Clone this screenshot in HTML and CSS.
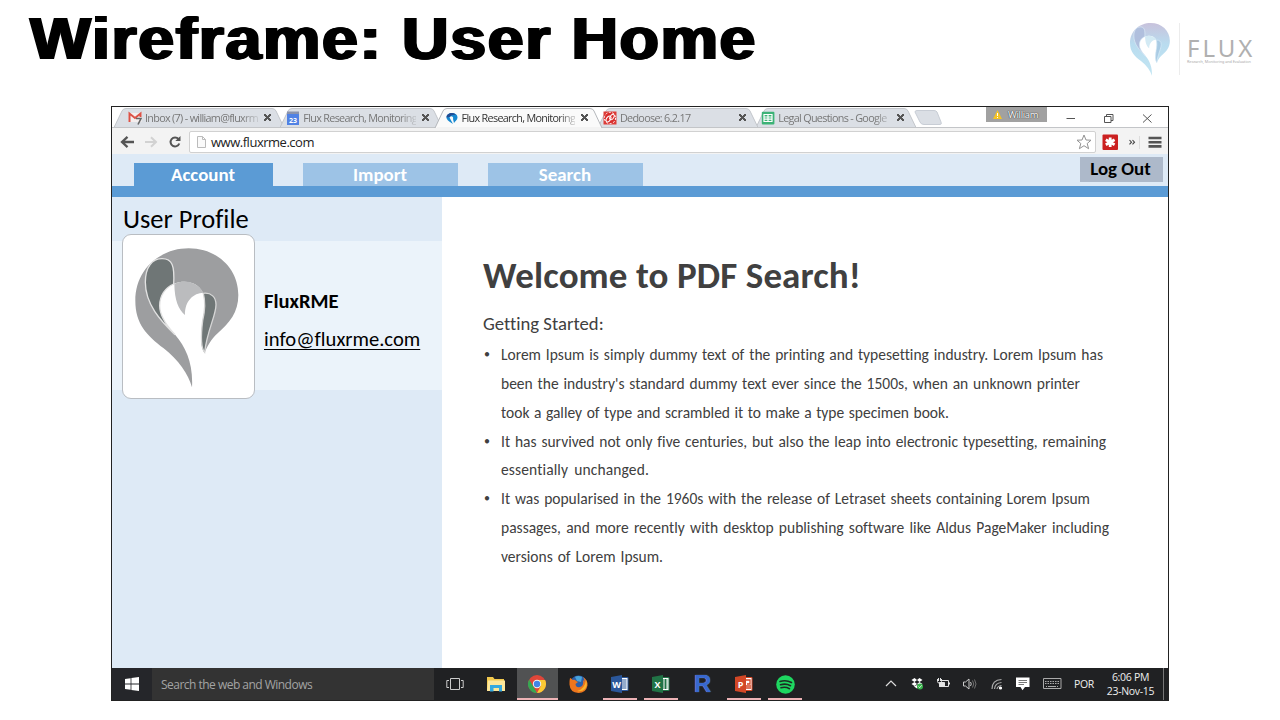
FILE: index.html
```html
<!DOCTYPE html>
<html lang="en">
<head>
<meta charset="utf-8">
<title>Wireframe: User Home</title>
<link rel="stylesheet" href="styles.css">
</head>
<body>
<svg class="defs" width="0" height="0">
  <defs>
    <linearGradient id="flux" x1="0" y1="0" x2="0" y2="1"><stop offset="0" stop-color="#c8c2dc"/><stop offset=".4" stop-color="#b9dcef"/><stop offset="1" stop-color="#c3e6f3"/></linearGradient>
    <path id="m-body" d="M265 143C350 143 414 203 414 283C414 335 388 366 352 398C332 416 319 440 313 457C303 445 301 420 303 395C306 360 318 320 311 285C303 257 280 243 252 243C210 243 178 272 178 315C178 347 198 374 225 403C257 440 279 490 275 560C264 520 235 478 190 443C140 404 105 370 105 300C105 205 180 143 265 143Z"/>
    <path id="m-left" d="M185 174C216 174 223 195 220 250C195 260 178 285 178 315C178 347 200 376 224 402C180 360 135 310 135 245C135 200 155 174 185 174Z"/>
    <path id="m-right" d="M309 278C333 275 347 290 347 312C347 345 320 390 313 455C300 440 302 400 307 360C313 335 316 305 309 278Z"/>
    <path id="m-heart" d="M222 250C245 237 288 239 309 276C280 277 253 300 254 343C234 325 223 300 222 250Z"/>
  </defs>
</svg>
<header class="slide-head">
  <h1 class="slide-title">Wireframe: User Home</h1>
  <div class="brand">
    <svg class="brand-mark" viewBox="105 143 310 418" preserveAspectRatio="none"><use href="#m-body" fill="url(#flux)"/><use href="#m-left" fill="#b0bfdd" stroke="#dcecf7" stroke-width="5"/><use href="#m-right" fill="#a9cbe4" stroke="#dcecf7" stroke-width="5"/><use href="#m-heart" fill="#d3eaf4"/></svg>
    <span class="brand-rule"></span>
    <div class="brand-words"><div class="brand-name">FLUX</div><div class="brand-tag">Research, Monitoring and Evaluation</div></div>
  </div>
</header>

<main class="screen">
  <div class="tabstrip">
    <svg class="tab-shapes" width="1056" height="21" viewBox="0 0 1056 21">
      <g fill="#dbdfe5" stroke="#c3c6cb" stroke-width="1">
        <path d="M644 20.500L652 4Q653 1.500 656 1.500H792Q795 1.500 796 4L804 20.500"/>
        <path d="M486 20.500L494 4Q495 1.500 498 1.500H634Q637 1.500 638 4L646 20.500"/>
        <path d="M2 20.500L10 4Q11 1.500 14 1.500H160Q163 1.500 164 4L172 20.500"/>
        <path d="M168 20.500L176 4Q177 1.500 180 1.500H318Q321 1.500 322 4L330 20.500"/>
        <path d="M803 5Q803 3.500 805 3.500H822Q824 3.500 825 5L829 15Q830 17.500 828 17.500H812Q809 17.500 808 15Z" stroke="#c8cdd5"/>
      </g>
      <path d="M0 20.500H1056" stroke="#c3c5c8"/>
      <path d="M323 21L331 4Q332 1.500 335 1.500H478Q481 1.500 482 4L490 21" fill="#fafafa" stroke="#b4b7bb"/>
      <path d="M325 20.500H488" stroke="#f3f3f3"/>
    </svg>
    <div class="tab"><svg class="fav" viewBox="0 0 14 14"><path d="M.5 2h13v9H.5z" fill="#f4eeee"/><path d="M1.500 11V2.500L7 7l5.500-4.500V6" fill="none" stroke="#dc5247" stroke-width="2"/><path d="M8 7.500h5L10 13.500" fill="none" stroke="#666" stroke-width="1.600"/></svg><span class="tab-text">Inbox (7) - william@fluxrm</span><i class="x"></i></div>
    <div class="tab"><svg class="fav" viewBox="0 0 14 14"><path d="M1 .5h12v3H1z" fill="#8b93ac"/><path d="M1 3h12v11H1z" fill="#5182e4"/><text x="7" y="11.500" text-anchor="middle" class="cal-num">23</text></svg><span class="tab-text">Flux Research, Monitoring</span><i class="x"></i></div>
    <div class="tab active"><svg class="fav" viewBox="0 0 14 14"><path d="M7 2C10 2 12.500 3.500 12.500 6.500C12.500 9 10 10 9 12L8 8C9 6 6 4 4.500 6.500L8 13C5 11 1.500 9 1.500 6.500C1.500 3.500 4 2 7 2Z" fill="#1688d0"/><path d="M7 2C4 2 1.500 3.500 1.500 6.500L4.500 6Q7 3 11 4Q9.500 2 7 2Z" fill="#224b92"/></svg><span class="tab-text">Flux Research, Monitoring</span><i class="x"></i></div>
    <div class="tab"><svg class="fav" viewBox="0 0 14 14"><path d="M.5.5h13v13H.5z" fill="#dd3c38"/><circle cx="7" cy="7" r="5.600" fill="#d92d2d" stroke="#fff" stroke-width="1" stroke-dasharray="2 1.500"/><ellipse cx="5.500" cy="8" rx="2" ry="3.200" transform="rotate(35 5.500 8)" fill="none" stroke="#fff"/><ellipse cx="9" cy="6" rx="1.800" ry="3" transform="rotate(35 9 6)" fill="none" stroke="#fff"/></svg><span class="tab-text">Dedoose: 6.2.17</span><i class="x"></i></div>
    <div class="tab"><svg class="fav" viewBox="0 0 14 14"><rect x=".8" y=".8" width="12.600" height="12.600" rx="1" fill="#3db377"/><path d="M3 3.500h8v7H3zM3 6h8M3 8.200h8M7 3.500v7" fill="none" stroke="#fff" stroke-width="1.200"/></svg><span class="tab-text">Legal Questions - Google</span><i class="x"></i></div>
    <div class="user"><svg width="9" height="9" viewBox="0 0 9 9"><path d="M4.500 0L9 9H0Z" fill="#f6c423"/><path d="M4.500 3v3M4.500 7v1" stroke="#fff"/></svg><span>William</span></div>
    <svg class="winbtns" width="102" height="21" viewBox="0 0 102 21" fill="none" stroke="#555" stroke-width="1"><path d="M7.500 11.500h8.500M45.500 9.500h6.500v6h-6.500zM47.500 9.500v-2h6.500v6h-2M84 7.500l8.500 8M92.500 7.500l-8.500 8"/></svg>
  </div>

  <div class="toolbar">
    <svg class="nav" width="76" height="26" viewBox="0 0 76 26" fill="none"><path d="M22 14H10.500M15.500 8.800L10 14L15.500 19.200" stroke="#555" stroke-width="2.300"/><path d="M33 14H43M39 9.200L44 14L39 18.800" stroke="#d2d2d2" stroke-width="2"/><path d="M66.500 11A4.500 4.500 0 1 0 67.300 15.500" stroke="#555" stroke-width="2"/><path d="M68.500 8v5h-5.200z" fill="#555"/></svg>
    <div class="urlbox">
      <svg width="11" height="14" viewBox="0 0 11 14" fill="#fafafa" stroke="#bbb"><path d="M1.500 1.500H6.500L9.500 4.500V12.500H1.500ZM6.500 1.500V4.500H9.500"/></svg>
      <span class="url">www.fluxrme.com</span>
      <svg class="star" width="16" height="16" viewBox="0 0 16 16" fill="#fff" stroke="#929292"><path d="M8 1L10 6L15 6.200L11.200 9.500L12.600 14.700L8 11.700L3.400 14.700L4.800 9.500L1 6.200L6 6Z"/></svg>
    </div>
    <svg class="ext" width="72" height="26" viewBox="0 0 72 26"><rect x="6.500" y="6.500" width="15.500" height="15.500" rx="1" fill="#cb2020"/><path d="M14.200 9.500v9.500M9.800 11.800l8.800 5M18.600 11.800l-8.800 5" stroke="#fff" stroke-width="2.800"/><path d="M33.500 12l2 2.200l-2 2.200M36.500 12l2 2.200l-2 2.200" fill="none" stroke="#444" stroke-width="1.100"/><path d="M43.500 8v13" stroke="#ddd"/><path d="M52.500 10h13M52.500 14.200h13M52.500 18.400h13" stroke="#555" stroke-width="2.600"/></svg>
  </div>

  <nav class="app-nav">
    <a class="app-tab current">Account</a><a class="app-tab">Import</a><a class="app-tab">Search</a>
    <a class="logout">Log Out</a>
  </nav>

  <div class="content">
    <aside class="sidebar">
      <h2 class="side-title"><span>User Profile</span></h2>
      <div class="profile">
        <div class="avatar"><svg width="104" height="140" viewBox="104 142 312 420"><use href="#m-body" fill="#9d9ea0"/><use href="#m-left" fill="#6f7676" stroke="#e2e2e2" stroke-width="4"/><use href="#m-right" fill="#6f7676" stroke="#d6d6d6" stroke-width="4"/><use href="#m-heart" fill="#bbbcbe"/></svg></div>
        <div class="who"><div class="name">FluxRME</div><div class="mail">info@fluxrme.com</div></div>
      </div>
    </aside>
    <section class="welcome">
      <h2 class="hello">Welcome to PDF Search!</h2>
      <p class="start">Getting Started:</p>
      <ul class="notes">
        <li><span class="l1">Lorem Ipsum is simply dummy text of the printing and typesetting industry. Lorem Ipsum has</span><span class="l2">been the industry's standard dummy text ever since the 1500s, when an unknown printer</span><span class="l3">took a galley of type and scrambled it to make a type specimen book.</span></li>
        <li><span class="l4">It has survived not only five centuries, but also the leap into electronic typesetting, remaining</span><span class="l5">essentially unchanged.</span></li>
        <li><span class="l6">It was popularised in the 1960s with the release of Letraset sheets containing Lorem Ipsum</span><span class="l7">passages, and more recently with desktop publishing software like Aldus PageMaker including</span><span class="l8">versions of Lorem Ipsum.</span></li>
      </ul>
    </section>
  </div>

  <footer class="taskbar">
    <div class="win"><svg width="14" height="14" viewBox="0 0 14 14" fill="#fff"><path d="M0 2L5.600 1.200V6.600H0ZM6.400 1.100L14 0V6.600H6.400ZM0 7.400H5.600V12.800L0 12ZM6.400 7.400H14V14L6.400 12.900Z"/></svg></div>
    <div class="search">Search the web and Windows</div>
    <div class="apps">
      <div class="app"><svg width="18" height="12" viewBox="0 0 18 12" fill="none" stroke="#ccc"><path d="M4.500.5h9v11h-9zM3 2.500H.8v7H3M15 2.500h2.200v7H15"/></svg></div>
      <div class="app"><svg width="18" height="16" viewBox="0 0 18 16"><path d="M0 1h6l1.500 2H17v12H0z" fill="#f2c94e"/><path d="M1 4.500h17V15H0z" fill="#fde79b"/><path d="M3 9h12v6.500h-3V12H6.500v3.500H3z" fill="#35a9df"/></svg></div>
      <div class="app on"><svg width="18" height="18" viewBox="0 0 18 18"><circle cx="9" cy="9" r="9" fill="#e04639"/><path d="M1.200 4.500L5.200 11.200L9 18A9 9 0 0 1 1.200 4.500Z" fill="#35a853"/><path d="M9 5H17.100A9 9 0 0 1 9 18L12.700 11.200Z" fill="#fbc934"/><circle cx="9" cy="9" r="4.200" fill="#f4f4f4"/><circle cx="9" cy="9" r="3.200" fill="#4285e8"/></svg></div>
      <div class="app"><svg width="19" height="19" viewBox="0 0 19 19"><circle cx="9.500" cy="9" r="8.500" fill="#2d5fa8"/><path d="M6 2Q9 0 13 2L12 7L8 6Z" fill="#47a5dc"/><path d="M1 3Q3 3.500 3.500 5Q6 4 7 6L9 7L6.500 9Q7 13 11 12Q15 11 14 5Q15 6 15.500 7Q15.500 4 14 2Q19 5 18.500 10.500Q17 18 9.500 18Q1 17.500.5 9.500Q.3 6 1 3Z" fill="#ed751d"/><path d="M17 5Q19 10 16 14Q13 17 8 16Q16 14 17 5Z" fill="#f9b52b"/></svg></div>
      <div class="app open"><svg width="18" height="18" viewBox="0 0 18 18"><path d="M9 2.500h8v13H9z" fill="#fff" stroke="#2b579a"/><path d="M11 5h4.500M11 7h4.500M11 9h4.500M11 11h4.500M11 13h4.500" stroke="#2b579a"/><path d="M0 2L11 0V18L0 16Z" fill="#2b579a"/><text x="5.500" y="12.500" text-anchor="middle" class="office">W</text></svg></div>
      <div class="app open"><svg width="18" height="18" viewBox="0 0 18 18"><path d="M9 2.500h8v13H9z" fill="#fff" stroke="#217346"/><path d="M11 5h4.500M11 7h4.500M11 9h4.500M11 11h4.500M11 13h4.500M13.500 4v10" stroke="#217346"/><path d="M0 2L11 0V18L0 16Z" fill="#217346"/><text x="5.500" y="12.500" text-anchor="middle" class="office">X</text></svg></div>
      <div class="app"><span class="r-logo">R</span></div>
      <div class="app open"><svg width="18" height="18" viewBox="0 0 18 18"><path d="M9 2.500h8v13H9z" fill="#fff" stroke="#d24726"/><path d="M11 5h4v4h-3M11 11h5M11 13h5" fill="none" stroke="#d24726" stroke-width="1.300"/><path d="M0 2L11 0V18L0 16Z" fill="#d24726"/><text x="5.500" y="12.500" text-anchor="middle" class="office">P</text></svg></div>
      <div class="app open"><svg width="19" height="19" viewBox="0 0 19 19"><circle cx="9.500" cy="9.500" r="9.300" fill="#1ed760"/><path d="M4 6.500Q10 4.500 15.500 7.500M4.500 9.800Q10 8.200 14.500 10.700M5 12.800Q9.500 11.500 13.500 13.700" fill="none" stroke="#1d2b22" stroke-width="1.600" stroke-linecap="round"/></svg></div>
    </div>
    <div class="tray">
      <svg width="26" height="32" viewBox="0 0 26 32" fill="none" stroke="#ddd" stroke-width="1.200"><path d="M8 18L13 13L18 18"/></svg>
      <svg width="26" height="32" viewBox="0 0 26 32"><path d="M10.500 10L13 12L10.500 14L7.500 12ZM15.500 10L18.500 12L15.500 14L13 12ZM10.500 14L13 16L10.500 18L7.500 16ZM15.500 14L18.500 16L15.500 18L13 16ZM10 18.500L13 17L15.500 18.500L13 20.500Z" fill="#fff"/><circle cx="16" cy="18.500" r="3" fill="#37b24a"/><path d="M14.500 18.500l1.200 1.200l2-2.400" fill="none" stroke="#fff" stroke-width=".8"/></svg>
      <svg width="26" height="32" viewBox="0 0 26 32" fill="none" stroke="#e3e3e3"><path d="M11 12.500h7.500v6H9.500v-3M19.500 14.500v2M7.500 11v2.500q0 1.500 1.500 1.500h1q1.500 0 1.500-1.500V11M8.500 10v3M10.500 10v3"/><path d="M9.500 14.500h5v4h-5z" fill="#e3e3e3"/></svg>
      <svg width="27" height="32" viewBox="0 0 27 32" fill="none" stroke="#c9c9c9"><path d="M7.500 14v4h2l3.500 3V11L9.500 14Z"/><path d="M14.500 14q1.500 2 0 4"/><path d="M16.500 12.500q2.500 3.500 0 7M18.500 11.500q3 4.500 0 9" stroke="#707070"/></svg>
      <svg width="27" height="32" viewBox="0 0 27 32" fill="none" stroke="#aaa" stroke-width="1.200"><path d="M9 21Q9 12 18.500 11.500M11.500 21Q12 15 18.500 14.500M14 21Q14.500 18 18.500 17.500"/><circle cx="17.500" cy="20" r="1" fill="#fff" stroke="#fff"/></svg>
      <svg width="25" height="32" viewBox="0 0 25 32"><path d="M6 9.500h13.500V19H15l-2.500 3.200L10.500 19H6Z" fill="#fff"/><path d="M8.500 12.500h8.500M8.500 14.500h8.500M8.500 16.500h5.500" stroke="#777"/></svg>
      <svg width="34" height="32" viewBox="0 0 34 32" fill="none" stroke="#aaa"><path d="M8.500 10.500h17.500v10h-17.500z"/><path d="M10 13.500h14M10 15.500h14" stroke-dasharray="1.500 1"/><path d="M11 18.500h1M13 18.500h8M22 18.500h1"/></svg>
      <span class="lang">POR</span>
      <div class="clock"><span>6:06 PM</span><span>23-Nov-15</span></div>
      <i class="peek"></i>
    </div>
  </footer>
</main>
</body>
</html>
```
FILE: styles.css
```css
* { box-sizing: border-box; }
body { margin: 0; width: 1280px; height: 720px; overflow: hidden; background: #fff; color: #000; font-family: Carlito, Lato, sans-serif; font-variant-ligatures: none; }
.defs { position: absolute; }
svg { display: block; flex: none; }
h1, h2, p, ul { margin: 0; padding: 0; font-weight: normal; }

.slide-head { display: flex; justify-content: space-between; height: 106px; padding-left: 30px; }
.slide-title { padding-top: 4px; font: bold 60px/70px "Liberation Sans", sans-serif; letter-spacing: 1.5px; white-space: nowrap; text-shadow: 1.4px 0 #000, -1.4px 0 #000, 0.7px 0 #000, -0.7px 0 #000; transform: scaleX(1.075); transform-origin: 0 0; }
.brand { display: flex; width: 150px; padding-top: 23px; }
.brand-mark { width: 40px; height: 53px; }
.brand-rule { width: 1px; height: 52px; margin: 0 7px 0 9px; background: #ececec; }
.brand-name { height: 37px; padding-top: 13px; font: 24px/24px "Noto Sans", sans-serif; letter-spacing: 3px; color: #b0b0b0; }
.brand-tag { font: 3.8px/4px "Noto Sans", sans-serif; color: #aaa; white-space: nowrap; letter-spacing: -0.05px; }

.screen { display: flex; flex-direction: column; width: 1058px; height: 595px; margin-left: 111px; border: 1px solid #222; }

.tabstrip { position: relative; display: flex; flex: none; height: 21px; padding-left: 16px; background: #fff; font: 10.8px/20px "Open Sans", sans-serif; color: #777; }
.tab-shapes { position: absolute; left: 0; top: 0; }
.tab { position: relative; display: flex; align-items: center; width: 158.3px; height: 21px; }
.fav { width: 14px; height: 14px; margin-right: 3px; }
.tab-text { width: 113px; overflow: hidden; white-space: nowrap; letter-spacing: -0.68px; -webkit-mask-image: linear-gradient(90deg, #000 85%, rgba(0, 0, 0, 0.2)); }
.active .tab-text { color: #333; }
.x { width: 7px; height: 7px; margin-left: 6px; background: linear-gradient(45deg, transparent 40%, #555 40%, #555 60%, transparent 60%), linear-gradient(-45deg, transparent 40%, #555 40%, #555 60%, transparent 60%); }
.cal-num { font: bold 7px "Open Sans", sans-serif; letter-spacing: 0; fill: #fff; }
.user { display: flex; align-items: center; gap: 6px; width: 61px; height: 15px; margin-left: 66.5px; padding-left: 7px; background: #a1a1a1; color: #fff; font-size: 9.5px; letter-spacing: -0.3px; text-shadow: 0 0 1px #333, 0 0 1px #333; }
.winbtns { margin-left: 12px; }

.toolbar { display: flex; flex: none; height: 26px; background: #f3f3f3; }
.urlbox { display: flex; align-items: center; width: 907px; height: 22px; margin: 3px 0 0 1px; padding: 0 3px 0 6px; border: 1px solid #d1d1d1; border-radius: 2px; background: #fff; }
.url { margin-left: 4px; font: 13px/20px "Open Sans", sans-serif; letter-spacing: -0.48px; color: #222; }
.star { margin-left: auto; }

.app-nav { display: flex; flex: none; align-items: flex-end; height: 43px; padding: 0 5px 0 22px; border-bottom: 11px solid #5b9bd5; background: #deeaf6; font-weight: bold; font-size: 18.9px; line-height: 24px; }
.app-tab { width: 155px; height: 23px; margin-right: 30px; padding-right: 1px; background: #9dc3e6; color: #fff; text-align: center; }
.app-tab.current { width: 139px; background: #5b9bd5; }
.logout { align-self: flex-start; width: 83px; height: 25px; margin: 3px 0 0 auto; padding-right: 2px; background: #adb9ca; text-align: center; white-space: nowrap; }

.content { display: flex; flex: none; height: 471px; background: #fff; }
.sidebar { width: 330px; background: #deeaf6; }
.side-title { height: 44px; padding: 5px 0 0 11px; font-size: 26.5px; line-height: 34px; white-space: nowrap; }
.profile { display: flex; height: 149px; padding-left: 10px; background: #ebf3fa; }
.avatar { display: flex; flex: none; justify-content: center; width: 133px; height: 165px; margin-top: -7px; padding: 13px 3px 0 0; border: 1px solid #b9bdc2; border-radius: 9px; background: #fff; }
.who { padding: 41px 0 0 9px; font-size: 20.6px; line-height: 38px; white-space: nowrap; }
.name { font-weight: bold; }
.mail { text-decoration: underline; text-underline-offset: 3px; text-decoration-thickness: 1px; }

.welcome { padding: 54px 0 0 41px; color: #404040; }
.hello { font-size: 37px; line-height: 50px; letter-spacing: 0.1px; font-weight: bold; white-space: nowrap; }
.start { height: 40px; padding-top: 7px; font-size: 18.7px; line-height: 32px; }
.notes { list-style: none; }
.notes li { position: relative; padding-left: 18px; font-size: 15.5px; line-height: 28.85px; }
.notes li::before { content: "•"; position: absolute; left: 1px; top: -1px; font-size: 12px; }
.notes li span { display: block; white-space: nowrap; text-align-last: justify; }
.notes .l1 { width: 602px; }
.notes .l2 { width: 579px; }
.notes .l3 { width: 448px; }
.notes .l4 { width: 605px; }
.notes .l5 { width: 148px; letter-spacing: 0.12px; }
.notes .l6 { width: 589px; }
.notes .l7 { width: 608px; }
.notes .l8 { width: 162px; }

.taskbar { display: flex; flex: none; height: 32px; background: #202123; color: #eee; font-family: "Open Sans", sans-serif; }
.win { display: flex; align-items: center; justify-content: center; width: 40px; background: #25262a; }
.search { width: 282px; padding-left: 9px; background: #333; color: #a3a3a3; font-size: 12px; line-height: 33px; letter-spacing: -0.52px; }
.apps { display: flex; }
.app { display: flex; align-items: center; justify-content: center; width: 41.3px; height: 32px; }
.on { background: #515253; box-shadow: inset 0 -2px #edb3b6; }
.open { background: linear-gradient(#edb3b6, #edb3b6) center bottom / 34px 2px no-repeat; }
.office { font: bold 9px "Open Sans", sans-serif; fill: #fff; }
.r-logo { font: bold 24px/32px "Liberation Sans", sans-serif; color: #3868cf; text-shadow: 0 0 1px #9bb8ff; }
.tray { display: flex; align-items: center; margin-left: auto; }
.lang { width: 31px; padding-left: 5px; font-size: 10.5px; letter-spacing: -0.4px; }
.clock { display: flex; flex-direction: column; align-items: center; width: 61px; font-size: 10.5px; line-height: 14.5px; letter-spacing: -0.3px; }
.peek { width: 1px; height: 32px; margin: 0 4px 0 2px; background: #777; }
```
